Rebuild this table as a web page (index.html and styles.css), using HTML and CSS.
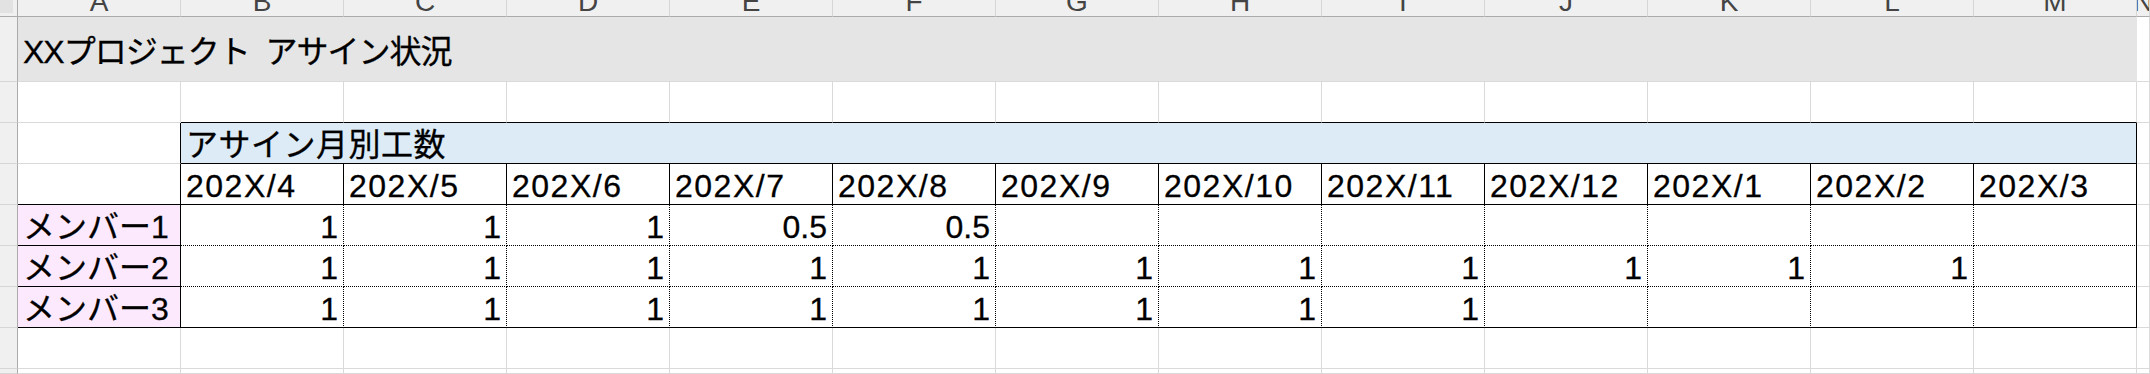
FILE: index.html
```html
<!DOCTYPE html>
<html lang="ja">
<head>
<meta charset="utf-8">
<title>XXプロジェクト アサイン状況</title>
<link rel="stylesheet" href="styles.css">
</head>
<body>
<div class="sheet">
  <!-- row 0: column headers -->
  <div class="corner"><span class="corner-box"></span></div>
  <div class="ch">A</div><div class="ch">B</div><div class="ch">C</div><div class="ch">D</div>
  <div class="ch">E</div><div class="ch">F</div><div class="ch">G</div><div class="ch">H</div>
  <div class="ch">I</div><div class="ch">J</div><div class="ch">K</div><div class="ch">L</div>
  <div class="ch">M</div><div class="ch">N</div>

  <!-- row 1: title -->
  <div class="rh"></div>
  <div class="c title">XXプロジェクト&nbsp;&nbsp;アサイン状況</div>
  <div class="c"></div>

  <!-- row 2: blank -->
  <div class="rh"></div>
  <div class="c"></div>
  <div class="c bb-k"></div><div class="c bb-k"></div><div class="c bb-k"></div><div class="c bb-k"></div>
  <div class="c bb-k"></div><div class="c bb-k"></div><div class="c bb-k"></div><div class="c bb-k"></div>
  <div class="c bb-k"></div><div class="c bb-k"></div><div class="c bb-k"></div><div class="c bb-k"></div>
  <div class="c"></div>

  <!-- row 3: band -->
  <div class="rh"></div>
  <div class="c br-k"></div>
  <div class="c band br-k bb-k">アサイン月別工数</div>
  <div class="c"></div>

  <!-- row 4: months -->
  <div class="rh"></div>
  <div class="c br-k bb-k"></div>
  <div class="c date br-k bb-k">202X/4</div>
  <div class="c date br-k bb-k">202X/5</div>
  <div class="c date br-k bb-k">202X/6</div>
  <div class="c date br-k bb-k">202X/7</div>
  <div class="c date br-k bb-k">202X/8</div>
  <div class="c date br-k bb-k">202X/9</div>
  <div class="c date br-k bb-k">202X/10</div>
  <div class="c date br-k bb-k">202X/11</div>
  <div class="c date br-k bb-k">202X/12</div>
  <div class="c date br-k bb-k">202X/1</div>
  <div class="c date br-k bb-k">202X/2</div>
  <div class="c date br-k bb-k">202X/3</div>
  <div class="c"></div>

  <!-- row 5: member 1 -->
  <div class="rh"></div>
  <div class="c member br-k bb-k">メンバー1</div>
  <div class="c num br-d bb-d">1</div>
  <div class="c num br-d bb-d">1</div>
  <div class="c num br-d bb-d">1</div>
  <div class="c num br-d bb-d">0.5</div>
  <div class="c num br-d bb-d">0.5</div>
  <div class="c num br-d bb-d"></div>
  <div class="c num br-d bb-d"></div>
  <div class="c num br-d bb-d"></div>
  <div class="c num br-d bb-d"></div>
  <div class="c num br-d bb-d"></div>
  <div class="c num br-d bb-d"></div>
  <div class="c num br-k bb-d"></div>
  <div class="c"></div>

  <!-- row 6: member 2 -->
  <div class="rh"></div>
  <div class="c member br-k bb-k">メンバー2</div>
  <div class="c num br-d bb-d">1</div>
  <div class="c num br-d bb-d">1</div>
  <div class="c num br-d bb-d">1</div>
  <div class="c num br-d bb-d">1</div>
  <div class="c num br-d bb-d">1</div>
  <div class="c num br-d bb-d">1</div>
  <div class="c num br-d bb-d">1</div>
  <div class="c num br-d bb-d">1</div>
  <div class="c num br-d bb-d">1</div>
  <div class="c num br-d bb-d">1</div>
  <div class="c num br-d bb-d">1</div>
  <div class="c num br-k bb-d"></div>
  <div class="c"></div>

  <!-- row 7: member 3 -->
  <div class="rh"></div>
  <div class="c member br-k bb-k">メンバー3</div>
  <div class="c num br-d bb-k">1</div>
  <div class="c num br-d bb-k">1</div>
  <div class="c num br-d bb-k">1</div>
  <div class="c num br-d bb-k">1</div>
  <div class="c num br-d bb-k">1</div>
  <div class="c num br-d bb-k">1</div>
  <div class="c num br-d bb-k">1</div>
  <div class="c num br-d bb-k">1</div>
  <div class="c num br-d bb-k"></div>
  <div class="c num br-d bb-k"></div>
  <div class="c num br-d bb-k"></div>
  <div class="c num br-k bb-k"></div>
  <div class="c"></div>

  <!-- row 8: blank -->
  <div class="rh"></div>
  <div class="c"></div><div class="c"></div><div class="c"></div><div class="c"></div><div class="c"></div>
  <div class="c"></div><div class="c"></div><div class="c"></div><div class="c"></div><div class="c"></div>
  <div class="c"></div><div class="c"></div><div class="c"></div><div class="c"></div>

  <!-- row 9: partial -->
  <div class="rh"></div>
  <div class="c"></div><div class="c"></div><div class="c"></div><div class="c"></div><div class="c"></div>
  <div class="c"></div><div class="c"></div><div class="c"></div><div class="c"></div><div class="c"></div>
  <div class="c"></div><div class="c"></div><div class="c"></div><div class="c"></div>
</div>
</body>
</html>
```

FILE: styles.css
```css
* {
  box-sizing: border-box;
}

html, body {
  margin: 0;
  padding: 0;
  background: #ffffff;
  overflow: hidden;
}

.sheet {
  width: 2150px;
  height: 374px;
  display: grid;
  grid-template-columns: 18px repeat(13, 163px) 1fr;
  grid-template-rows: 17px 65px repeat(7, 41px) 1fr;
  font-family: "Liberation Sans", "Noto Sans CJK JP", sans-serif;
  font-size: 32px;
  color: #000;
  overflow: hidden;
}

/* headers */
.corner {
  background: #f0f0f0;
  border-right: 1px solid #ababab;
  border-bottom: 1px solid #ababab;
  display: flex;
}
.corner-box {
  width: 13px;
  height: 13px;
  background: #e2e2e2;
}

.ch {
  background: #f0f0f0;
  border-right: 1px solid #d6d6d6;
  border-bottom: 1px solid #ababab;
  display: flex;
  justify-content: center;
  align-items: flex-end;
  overflow: hidden;
  font-family: "Liberation Sans", sans-serif;
  font-size: 28px;
  line-height: 28px;
  color: #444;
}

.rh {
  background: #f0f0f0;
  border-right: 1px solid #ababab;
  border-bottom: 1px solid #d6d6d6;
}

/* cells */
.c {
  border-right: 1px solid #dadada;
  border-bottom: 1px solid #dadada;
  display: flex;
  align-items: flex-end;
  padding: 0 5px 2px 5px;
  line-height: 32px;
  white-space: nowrap;
  overflow: visible;
  -webkit-text-stroke: 0.3px #000;
}

.title {
  grid-column: 2 / span 13;
  background: #e5e5e5;
  border-right-color: #e5e5e5;
  padding-bottom: 13px;
  letter-spacing: -1px;
}

.band {
  grid-column: 3 / span 12;
  background: #ddebf7;
  letter-spacing: 0.5px;
}

.date {
  letter-spacing: 1.5px;
}

.member {
  background: #fde9fd;
}

.num {
  justify-content: flex-end;
}

/* borders */
.bb-k { border-bottom: 1px solid #000; }
.br-k { border-right: 1px solid #000; }
.bb-d { border-bottom: 1px dotted #000; }
.br-d { border-right: 1px dotted #000; }
```
